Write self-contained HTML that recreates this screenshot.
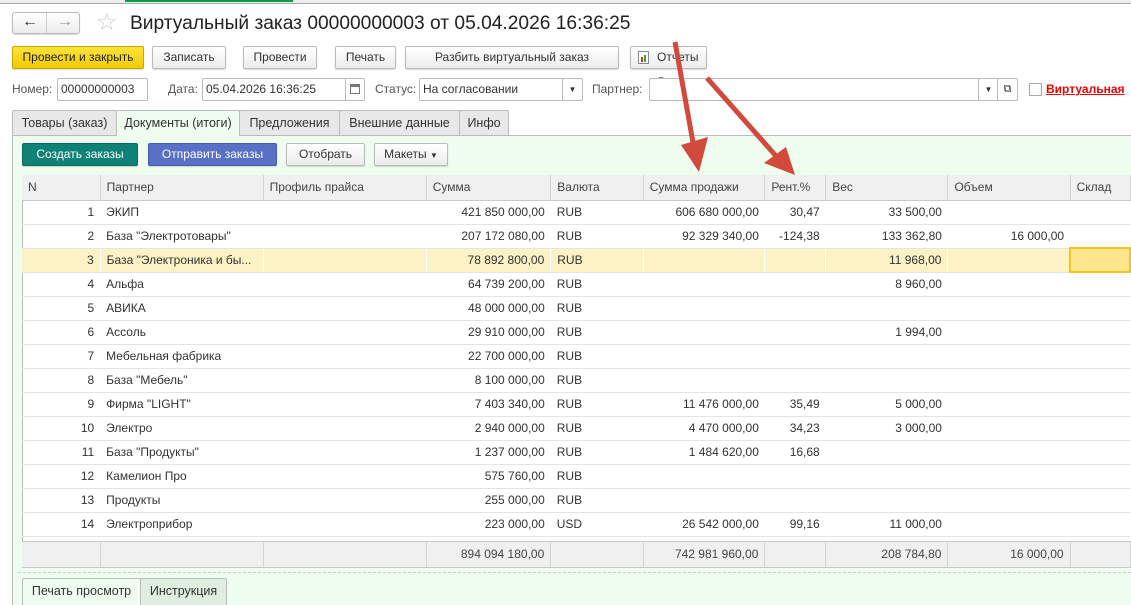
<!DOCTYPE html>
<html><head><meta charset="utf-8"><style>
*{box-sizing:border-box;margin:0;padding:0}
body{width:1131px;height:605px;overflow:hidden;background:#fff;font-family:"Liberation Sans",Arial,sans-serif;font-size:12px;color:#333;position:relative}
.a{position:absolute}
.btn{position:absolute;height:23px;border:1px solid #bbb;border-radius:2px;background:linear-gradient(#fff,#ececec);text-align:center;line-height:21px;font-size:12px;color:#333;box-shadow:0 1px 1px rgba(0,0,0,.15)}
.inp{position:absolute;height:23px;border:1px solid #bbb;border-radius:2px;background:#fff;line-height:21px;padding-left:3px;font-size:12px;color:#333}
.lbl{position:absolute;font-size:12px;color:#555;line-height:23px}
.tab{position:absolute;top:110px;height:25px;border:1px solid #bbb;border-bottom:none;background:#e8e8e8;line-height:24px;text-align:center;font-size:12.5px;color:#333;border-radius:2px 2px 0 0}
table{border-collapse:collapse;position:absolute;left:22px;top:175px;table-layout:fixed}
td{height:24px;border-bottom:1px solid #e4e4e4;padding:0 6px;white-space:nowrap;overflow:hidden;font-size:12px;color:#333}
tr.h td{height:25px;background:#f0f0f0;border-right:1px solid #d4d4d4;border-bottom:1px solid #c8c8c8;color:#444}
.r{text-align:right}
tr.sel td{background:#fdf1c6;border-right:1px solid #fff}
</style></head><body>
<div class="a" style="left:0;top:0;width:1131px;height:4px;background:#eee;border-bottom:1px solid #aaa"></div>
<div class="a" style="left:125px;top:0;width:168px;height:2px;background:#0a9a4a"></div>
<!-- nav -->
<div class="btn" style="left:12px;top:12px;width:68px;height:22px;border-radius:3px"></div>
<div class="a" style="left:46px;top:13px;width:1px;height:20px;background:#ccc"></div>
<div class="a" style="left:22px;top:12px;width:18px;font-size:16px;color:#333;line-height:20px;font-weight:bold">←</div>
<div class="a" style="left:57px;top:12px;width:18px;font-size:16px;color:#999;line-height:20px">→</div>
<div class="a" style="left:96px;top:9px;font-size:24px;color:#ccc;line-height:28px">☆</div>
<div class="a" style="left:130px;top:12px;font-size:19.2px;color:#222;line-height:24px">Виртуальный заказ 00000000003 от 05.04.2026 16:36:25</div>
<!-- toolbar -->
<div class="btn" style="left:12px;top:46px;width:132px;background:linear-gradient(#fde43a,#f2c900);border-color:#c9a600;color:#222">Провести и закрыть</div>
<div class="btn" style="left:152px;top:46px;width:74px">Записать</div>
<div class="btn" style="left:243px;top:46px;width:74px">Провести</div>
<div class="btn" style="left:335px;top:46px;width:61px">Печать</div>
<div class="btn" style="left:405px;top:46px;width:214px">Разбить виртуальный заказ</div>
<div class="btn" style="left:630px;top:46px;width:77px;text-align:left;padding-left:26px">Отчеты <span style="font-size:8px">▼</span></div>
<div class="a" style="left:638px;top:51px;width:11px;height:13px;border:1px solid #888;background:#fff"></div>
<div class="a" style="left:641px;top:57px;width:2px;height:5px;background:#c33"></div>
<div class="a" style="left:644px;top:55px;width:2px;height:7px;background:#3a3"></div>
<!-- fields -->
<div class="lbl" style="left:12px;top:78px">Номер:</div>
<div class="inp" style="left:57px;top:78px;width:91px">00000000003</div>
<div class="lbl" style="left:168px;top:78px">Дата:</div>
<div class="inp" style="left:202px;top:78px;width:145px">05.04.2026 16:36:25</div>
<div class="inp" style="left:345px;top:78px;width:20px;border-radius:0 2px 2px 0"></div>
<div class="a" style="left:350px;top:84px;width:10px;height:10px;border:1px solid #777;border-top-width:3px"></div>
<div class="lbl" style="left:375px;top:78px">Статус:</div>
<div class="inp" style="left:419px;top:78px;width:145px">На согласовании</div>
<div class="inp" style="left:562px;top:78px;width:21px;text-align:center;font-size:8px;padding:0">▼</div>
<div class="lbl" style="left:592px;top:78px">Партнер:</div>
<div class="inp" style="left:649px;top:78px;width:331px"></div>
<div class="inp" style="left:978px;top:78px;width:21px;text-align:center;font-size:8px;padding:0">▼</div>
<div class="inp" style="left:997px;top:78px;width:21px;text-align:center;font-size:11px;padding:0">⧉</div>
<div class="a" style="left:1029px;top:83px;width:13px;height:13px;border:1px solid #aaa;background:#fff"></div>
<div class="a" style="left:1046px;top:82px;font-size:12px;color:#e00;font-weight:bold;text-decoration:underline">Виртуальная</div>
<!-- tabs -->
<div class="tab" style="left:12px;width:105px">Товары (заказ)</div>
<div class="tab" style="left:116px;width:124px;background:#effdef;height:26px">Документы (итоги)</div>
<div class="tab" style="left:239px;width:101px">Предложения</div>
<div class="tab" style="left:339px;width:121px">Внешние данные</div>
<div class="tab" style="left:459px;width:50px">Инфо</div>
<div class="a" style="left:12px;top:135px;width:1119px;height:470px;background:#effdef;border-left:1px solid #bbb;border-top:1px solid #bbb"></div>
<div class="a" style="left:117px;top:134px;width:122px;height:3px;background:#effdef"></div>
<div class="btn" style="left:22px;top:143px;width:116px;background:#0f8277;border-color:#0b6d63;color:#fff">Создать заказы</div>
<div class="btn" style="left:148px;top:143px;width:129px;background:#5a6fc6;border-color:#4a5cb0;color:#fff">Отправить заказы</div>
<div class="btn" style="left:286px;top:143px;width:79px">Отобрать</div>
<div class="btn" style="left:374px;top:143px;width:74px">Макеты <span style="font-size:8px">▼</span></div>
<!-- table -->
<div class="a" style="left:22px;top:175px;width:1109px;height:393px;background:#fff;border:1px solid #bbb;border-right:none"></div>
<table>
<colgroup><col style="width:79px"><col style="width:163px"><col style="width:164px"><col style="width:125px"><col style="width:93px"><col style="width:122px"><col style="width:61px"><col style="width:123px"><col style="width:123px"><col style="width:60px"></colgroup>
<tr class="h"><td>N</td><td>Партнер</td><td>Профиль прайса</td><td>Сумма</td><td>Валюта</td><td>Сумма продажи</td><td>Рент.%</td><td>Вес</td><td>Объем</td><td>Склад</td></tr>
<tr><td class="r">1</td><td>ЭКИП</td><td></td><td class="r">421 850 000,00</td><td>RUB</td><td class="r">606 680 000,00</td><td class="r">30,47</td><td class="r">33 500,00</td><td></td><td></td></tr>
<tr><td class="r">2</td><td>База "Электротовары"</td><td></td><td class="r">207 172 080,00</td><td>RUB</td><td class="r">92 329 340,00</td><td class="r">-124,38</td><td class="r">133 362,80</td><td class="r">16 000,00</td><td></td></tr>
<tr class="sel"><td class="r">3</td><td>База "Электроника и бы...</td><td></td><td class="r">78 892 800,00</td><td>RUB</td><td></td><td></td><td class="r">11 968,00</td><td></td><td style="background:#fde68e;border:2px solid #f5c518"></td></tr>
<tr><td class="r">4</td><td>Альфа</td><td></td><td class="r">64 739 200,00</td><td>RUB</td><td></td><td></td><td class="r">8 960,00</td><td></td><td></td></tr>
<tr><td class="r">5</td><td>АВИКА</td><td></td><td class="r">48 000 000,00</td><td>RUB</td><td></td><td></td><td></td><td></td><td></td></tr>
<tr><td class="r">6</td><td>Ассоль</td><td></td><td class="r">29 910 000,00</td><td>RUB</td><td></td><td></td><td class="r">1 994,00</td><td></td><td></td></tr>
<tr><td class="r">7</td><td>Мебельная фабрика</td><td></td><td class="r">22 700 000,00</td><td>RUB</td><td></td><td></td><td></td><td></td><td></td></tr>
<tr><td class="r">8</td><td>База "Мебель"</td><td></td><td class="r">8 100 000,00</td><td>RUB</td><td></td><td></td><td></td><td></td><td></td></tr>
<tr><td class="r">9</td><td>Фирма "LIGHT"</td><td></td><td class="r">7 403 340,00</td><td>RUB</td><td class="r">11 476 000,00</td><td class="r">35,49</td><td class="r">5 000,00</td><td></td><td></td></tr>
<tr><td class="r">10</td><td>Электро</td><td></td><td class="r">2 940 000,00</td><td>RUB</td><td class="r">4 470 000,00</td><td class="r">34,23</td><td class="r">3 000,00</td><td></td><td></td></tr>
<tr><td class="r">11</td><td>База "Продукты"</td><td></td><td class="r">1 237 000,00</td><td>RUB</td><td class="r">1 484 620,00</td><td class="r">16,68</td><td></td><td></td><td></td></tr>
<tr><td class="r">12</td><td>Камелион Про</td><td></td><td class="r">575 760,00</td><td>RUB</td><td></td><td></td><td></td><td></td><td></td></tr>
<tr><td class="r">13</td><td>Продукты</td><td></td><td class="r">255 000,00</td><td>RUB</td><td></td><td></td><td></td><td></td><td></td></tr>
<tr><td class="r">14</td><td>Электроприбор</td><td></td><td class="r">223 000,00</td><td>USD</td><td class="r">26 542 000,00</td><td class="r">99,16</td><td class="r">11 000,00</td><td></td><td></td></tr>
<tr><td style="height:5px;border-bottom:1px solid #c8c8c8" colspan="10"></td></tr>
<tr class="h"><td style="height:26px"></td><td></td><td></td><td class="r">894 094 180,00</td><td></td><td class="r">742 981 960,00</td><td></td><td class="r">208 784,80</td><td class="r">16 000,00</td><td></td></tr>
</table>
<div class="a" style="left:18px;top:572px;width:1113px;border-top:1px dashed #ccc"></div>
<div class="tab" style="top:578px;left:22px;width:119px;background:#effdef;height:27px">Печать просмотр</div>
<div class="tab" style="top:578px;left:140px;width:87px;background:#dfeedf;height:27px">Инструкция</div>
<!-- arrows -->
<svg class="a" style="left:0;top:0" width="1131" height="605">
<g fill="#d24a3c" stroke="#d24a3c">
<line x1="675" y1="42" x2="694" y2="148" stroke-width="5"/>
<polygon points="681,145 708,137 699,172" stroke="none"/>
<line x1="707" y1="78" x2="776" y2="156" stroke-width="5"/>
<polygon points="764,163 786,147 795,175" stroke="none"/>
</g></svg>
</body></html>
